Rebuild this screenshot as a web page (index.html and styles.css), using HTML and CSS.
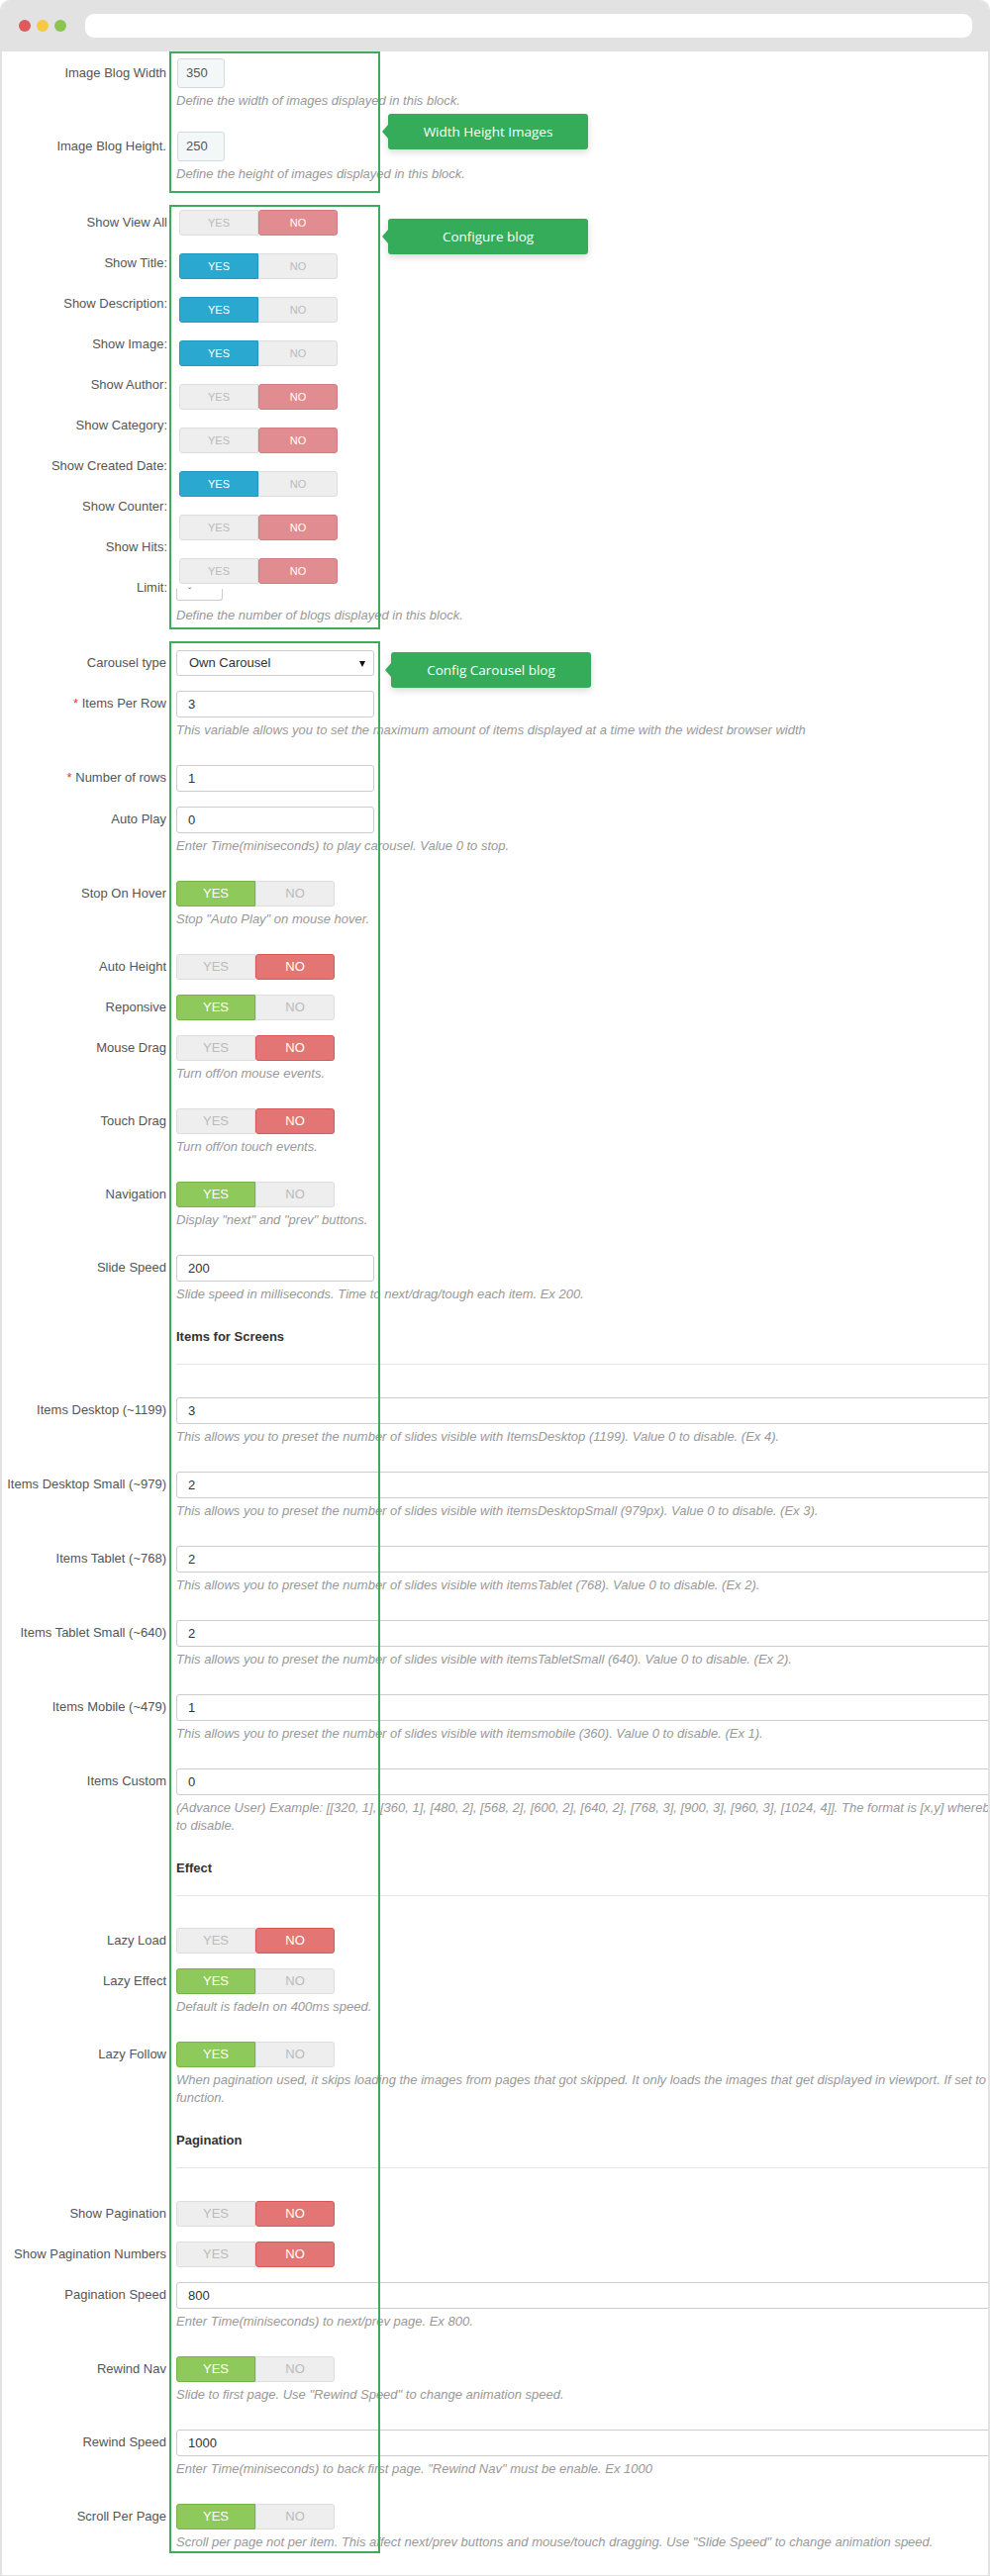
FILE: index.html
```html
<!DOCTYPE html>
<html lang="en">
<head>
  <meta charset="UTF-8">
  <title>Blog Module - Settings</title>
  <link rel="stylesheet" href="styles.css">
</head>
<body>
  <div class="window">
    <div class="titlebar">
      <span class="dot dot-red"></span>
      <span class="dot dot-yellow"></span>
      <span class="dot dot-green"></span>
      <div class="address"></div>
    </div>

    <div class="page">

      <!-- image size -->
      <div class="group group-size">
        <div class="callout">Width Height Images</div>
        <div class="field">
          <label>Image Blog Width</label>
          <div class="input input-small">350</div>
          <p class="help">Define the width of images displayed in this block.</p>
        </div>
        <div class="field">
          <label>Image Blog Height.</label>
          <div class="input input-small">250</div>
          <p class="help">Define the height of images displayed in this block.</p>
        </div>
      </div>

      <!-- blog options -->
      <div class="group group-blog">
        <div class="callout">Configure blog</div>
        <div class="columns">
          <div class="labels">
            <label>Show View All</label>
            <label>Show Title:</label>
            <label>Show Description:</label>
            <label>Show Image:</label>
            <label>Show Author:</label>
            <label>Show Category:</label>
            <label>Show Created Date:</label>
            <label>Show Counter:</label>
            <label>Show Hits:</label>
            <label>Limit:</label>
          </div>
          <div class="controls">
            <div class="toggle"><span class="opt">YES</span><span class="opt no is-on">NO</span></div>
            <div class="toggle"><span class="opt is-on">YES</span><span class="opt no">NO</span></div>
            <div class="toggle"><span class="opt is-on">YES</span><span class="opt no">NO</span></div>
            <div class="toggle"><span class="opt is-on">YES</span><span class="opt no">NO</span></div>
            <div class="toggle"><span class="opt">YES</span><span class="opt no is-on">NO</span></div>
            <div class="toggle"><span class="opt">YES</span><span class="opt no is-on">NO</span></div>
            <div class="toggle"><span class="opt is-on">YES</span><span class="opt no">NO</span></div>
            <div class="toggle"><span class="opt">YES</span><span class="opt no is-on">NO</span></div>
            <div class="toggle"><span class="opt">YES</span><span class="opt no is-on">NO</span></div>
            <div class="limit">ˇ</div>
            <p class="help">Define the number of blogs displayed in this block.</p>
          </div>
        </div>
      </div>

      <!-- carousel options -->
      <div class="group group-carousel">
        <div class="callout callout-carousel">Config Carousel blog</div>
        <div class="field">
          <label>Carousel type</label>
          <div class="select">Own Carousel</div>
        </div>
        <div class="field">
          <label><span class="req">*</span> Items Per Row</label>
          <div class="input">3</div>
          <p class="help">This variable allows you to set the maximum amount of items displayed at a time with the widest browser width</p>
        </div>
        <div class="field">
          <label><span class="req">*</span> Number of rows</label>
          <div class="input">1</div>
        </div>
        <div class="field">
          <label>Auto Play</label>
          <div class="input">0</div>
          <p class="help">Enter Time(miniseconds) to play carousel. Value 0 to stop.</p>
        </div>
        <div class="field">
          <label>Stop On Hover</label>
          <div class="toggle"><span class="opt is-on">YES</span><span class="opt no">NO</span></div>
          <p class="help">Stop "Auto Play" on mouse hover.</p>
        </div>
        <div class="field">
          <label>Auto Height</label>
          <div class="toggle"><span class="opt">YES</span><span class="opt no is-on">NO</span></div>
        </div>
        <div class="field">
          <label>Reponsive</label>
          <div class="toggle"><span class="opt is-on">YES</span><span class="opt no">NO</span></div>
        </div>
        <div class="field">
          <label>Mouse Drag</label>
          <div class="toggle"><span class="opt">YES</span><span class="opt no is-on">NO</span></div>
          <p class="help">Turn off/on mouse events.</p>
        </div>
        <div class="field">
          <label>Touch Drag</label>
          <div class="toggle"><span class="opt">YES</span><span class="opt no is-on">NO</span></div>
          <p class="help">Turn off/on touch events.</p>
        </div>
        <div class="field">
          <label>Navigation</label>
          <div class="toggle"><span class="opt is-on">YES</span><span class="opt no">NO</span></div>
          <p class="help">Display "next" and "prev" buttons.</p>
        </div>
        <div class="field">
          <label>Slide Speed</label>
          <div class="input">200</div>
          <p class="help">Slide speed in milliseconds. Time to next/drag/tough each item. Ex 200.</p>
        </div>

        <h4 class="section-title">Items for Screens</h4>
        <hr class="rule">

        <div class="field">
          <label>Items Desktop (~1199)</label>
          <div class="input input-wide">3</div>
          <p class="help">This allows you to preset the number of slides visible with ItemsDesktop (1199). Value 0 to disable. (Ex 4).</p>
        </div>
        <div class="field">
          <label>Items Desktop Small (~979)</label>
          <div class="input input-wide">2</div>
          <p class="help">This allows you to preset the number of slides visible with itemsDesktopSmall (979px). Value 0 to disable. (Ex 3).</p>
        </div>
        <div class="field">
          <label>Items Tablet (~768)</label>
          <div class="input input-wide">2</div>
          <p class="help">This allows you to preset the number of slides visible with itemsTablet (768). Value 0 to disable. (Ex 2).</p>
        </div>
        <div class="field">
          <label>Items Tablet Small (~640)</label>
          <div class="input input-wide">2</div>
          <p class="help">This allows you to preset the number of slides visible with itemsTabletSmall (640). Value 0 to disable. (Ex 2).</p>
        </div>
        <div class="field">
          <label>Items Mobile (~479)</label>
          <div class="input input-wide">1</div>
          <p class="help">This allows you to preset the number of slides visible with itemsmobile (360). Value 0 to disable. (Ex 1).</p>
        </div>
        <div class="field">
          <label>Items Custom</label>
          <div class="input input-wide">0</div>
          <p class="help">(Advance User) Example: [[320, 1], [360, 1], [480, 2], [568, 2], [600, 2], [640, 2], [768, 3], [900, 3], [960, 3], [1024, 4]]. The format is [x,y] whereby x=browser width and y=number of slides displayed. Value 0<br>to disable.</p>
        </div>

        <h4 class="section-title">Effect</h4>
        <hr class="rule">

        <div class="field">
          <label>Lazy Load</label>
          <div class="toggle"><span class="opt">YES</span><span class="opt no is-on">NO</span></div>
        </div>
        <div class="field">
          <label>Lazy Effect</label>
          <div class="toggle"><span class="opt is-on">YES</span><span class="opt no">NO</span></div>
          <p class="help">Default is fadeIn on 400ms speed.</p>
        </div>
        <div class="field">
          <label>Lazy Follow</label>
          <div class="toggle"><span class="opt is-on">YES</span><span class="opt no">NO</span></div>
          <p class="help">When pagination used, it skips loading the images from pages that got skipped. It only loads the images that get displayed in viewport. If set to false, all images get loaded when pagination used. It is a sub setting of the lazy load<br>function.</p>
        </div>

        <h4 class="section-title">Pagination</h4>
        <hr class="rule">

        <div class="field">
          <label>Show Pagination</label>
          <div class="toggle"><span class="opt">YES</span><span class="opt no is-on">NO</span></div>
        </div>
        <div class="field">
          <label>Show Pagination Numbers</label>
          <div class="toggle"><span class="opt">YES</span><span class="opt no is-on">NO</span></div>
        </div>
        <div class="field">
          <label>Pagination Speed</label>
          <div class="input input-wide">800</div>
          <p class="help">Enter Time(miniseconds) to next/prev page. Ex 800.</p>
        </div>
        <div class="field">
          <label>Rewind Nav</label>
          <div class="toggle"><span class="opt is-on">YES</span><span class="opt no">NO</span></div>
          <p class="help">Slide to first page. Use "Rewind Speed" to change animation speed.</p>
        </div>
        <div class="field">
          <label>Rewind Speed</label>
          <div class="input input-wide">1000</div>
          <p class="help">Enter Time(miniseconds) to back first page. "Rewind Nav" must be enable. Ex 1000</p>
        </div>
        <div class="field">
          <label>Scroll Per Page</label>
          <div class="toggle"><span class="opt is-on">YES</span><span class="opt no">NO</span></div>
          <p class="help">Scroll per page not per item. This affect next/prev buttons and mouse/touch dragging. Use "Slide Speed" to change animation speed.</p>
        </div>
      </div>

    </div>
  </div>
</body>
</html>
```

FILE: styles.css
```css
body {
  margin: 0;
  background: #fff;
  font-family: "Liberation Sans", Arial, sans-serif;
  font-size: 13px;
  color: #555;
}

.window {
  width: 1000px;
  box-sizing: border-box;
  border: 2px solid #e2e2e2;
  border-top: 0;
  border-radius: 10px 10px 0 0;
  overflow: hidden;
  background: #fff;
}

/* browser chrome */
.titlebar {
  display: flex;
  align-items: center;
  height: 52px;
  padding-left: 17px;
  padding-right: 16px;
  background: #e2e2e2;
}

.dot {
  width: 12px;
  height: 12px;
  border-radius: 50%;
  margin-right: 6px;
}

.dot-red { background: #df5a5d; }
.dot-yellow { background: #f6c843; }
.dot-green { background: #8dc350; margin-right: 19px; }

.address {
  flex: 1;
  height: 24px;
  background: #fff;
  border-radius: 9px;
}

/* page */
.page {
  position: relative;
  padding-bottom: 22px;
  overflow: hidden;
}

.group {
  position: relative;
}

.group + .group {
  margin-top: 12px;
}

/* green outline drawn over the form */
.group::before {
  content: "";
  position: absolute;
  left: 169px;
  top: 0;
  bottom: 0;
  width: 213px;
  border: 2px solid #3daa5c;
  box-sizing: border-box;
  z-index: 2;
}

.callout {
  position: absolute;
  left: 390px;
  top: 63px;
  width: 202px;
  height: 36px;
  line-height: 36px;
  text-align: center;
  background: #34ac5a;
  color: #fff;
  font-family: "Open Sans", "Noto Sans", sans-serif;
  font-size: 13.5px;
  border-radius: 3px;
  box-shadow: 0 3px 7px rgba(0,0,0,0.15);
}

.callout::before {
  content: "";
  position: absolute;
  left: -6px;
  top: 11px;
  border-top: 7px solid transparent;
  border-bottom: 7px solid transparent;
  border-right: 6px solid #34ac5a;
}

.group-blog .callout { top: 14px; }
.callout-carousel { left: 393px; top: 11px; }

/* fields */
.field {
  display: grid;
  grid-template-columns: 166px minmax(0, 1fr);
  column-gap: 10px;
  margin-bottom: 15px;
}

.field label {
  grid-column: 1;
  text-align: right;
  line-height: 26px;
  white-space: nowrap;
}

.field > .input,
.field > .select,
.field > .toggle {
  grid-column: 2;
}

.req { color: #e03a3a; }

.help {
  grid-column: 2;
  margin: 4px 0 11px;
  font-style: italic;
  color: #999;
  line-height: 18px;
  white-space: nowrap;
}

.input {
  box-sizing: border-box;
  width: 200px;
  height: 27px;
  line-height: 25px;
  padding: 0 11px;
  border: 1px solid #ccc;
  border-radius: 3px;
  background: #fff;
  color: #333;
}

.input-wide { width: 900px; }

.select {
  position: relative;
  box-sizing: border-box;
  width: 200px;
  height: 26px;
  line-height: 24px;
  padding-left: 12px;
  border: 1px solid #ccc;
  border-radius: 3px;
  color: #333;
}

.select::after {
  content: "";
  position: absolute;
  right: 8px;
  top: 10px;
  border-left: 3px solid transparent;
  border-right: 3px solid transparent;
  border-top: 6px solid #111;
}

/* yes / no switch */
.toggle {
  display: flex;
  width: 160px;
  height: 26px;
}

.opt {
  flex: 1;
  box-sizing: border-box;
  text-align: center;
  line-height: 24px;
  background: #eee;
  border: 1px solid #ddd;
  color: #bbb;
  border-radius: 3px 0 0 3px;
}

.opt.no { border-radius: 0 3px 3px 0; }

.opt.is-on {
  background: #8dc95b;
  border-color: #74b646;
  color: #fff;
}

.opt.no.is-on {
  background: #e37575;
  border-color: #d95757;
  border-radius: 3px;
}

/* first block */
.group-size {
  padding: 7px 0 10px;
}

.group-size .field { margin-bottom: 22px; }
.group-size .field:last-child { margin-bottom: 0; }
.group-size .help { margin: 4px 0 0; }

.group-size .field label { line-height: 30px; }

.input-small {
  width: 48px;
  height: 30px;
  line-height: 28px;
  padding: 0 8px;
  margin-left: 1px;
  background: #f4f7f8;
  border-color: #d3dadd;
  color: #555;
}

/* second block */
.columns {
  display: grid;
  grid-template-columns: 166px minmax(0, 1fr);
  column-gap: 10px;
  padding-bottom: 5px;
}

.labels {
  display: flex;
  flex-direction: column;
  align-items: flex-end;
  gap: 23px;
  padding-top: 9px;
  margin-right: -1px;
}

.labels label {
  line-height: 18px;
  white-space: nowrap;
}

.controls {
  padding-top: 5px;
}

.controls .toggle {
  margin-left: 3px;
  font-size: 11px;
}

.controls .toggle + .toggle { margin-top: 18px; }

.group-blog .opt.is-on {
  background: #2aa8d0;
  border-color: #2399bf;
}

.group-blog .opt.no.is-on {
  background: #e08c91;
  border-color: #d47b81;
}

.limit {
  box-sizing: border-box;
  width: 47px;
  height: 12px;
  margin-top: 5px;
  padding-left: 11px;
  border: 1px solid #ccc;
  border-top: 0;
  border-radius: 0 0 3px 3px;
  font-size: 10px;
  line-height: 8px;
  color: #555;
}

.controls .help { margin: 6px 0 0; }

/* carousel block */
.group-carousel {
  padding-top: 9px;
}

.group-carousel .field:last-child { margin-bottom: 0; }
.group-carousel .field:last-child .help { margin-bottom: 2px; }

.section-title {
  margin: -1px 0 0 176px;
  font-size: 13px;
  line-height: 18px;
  color: #333;
}

.rule {
  margin: 18px 0 32.5px 176px;
  border: 0;
  border-top: 1px solid #e6e6e6;
}
```
